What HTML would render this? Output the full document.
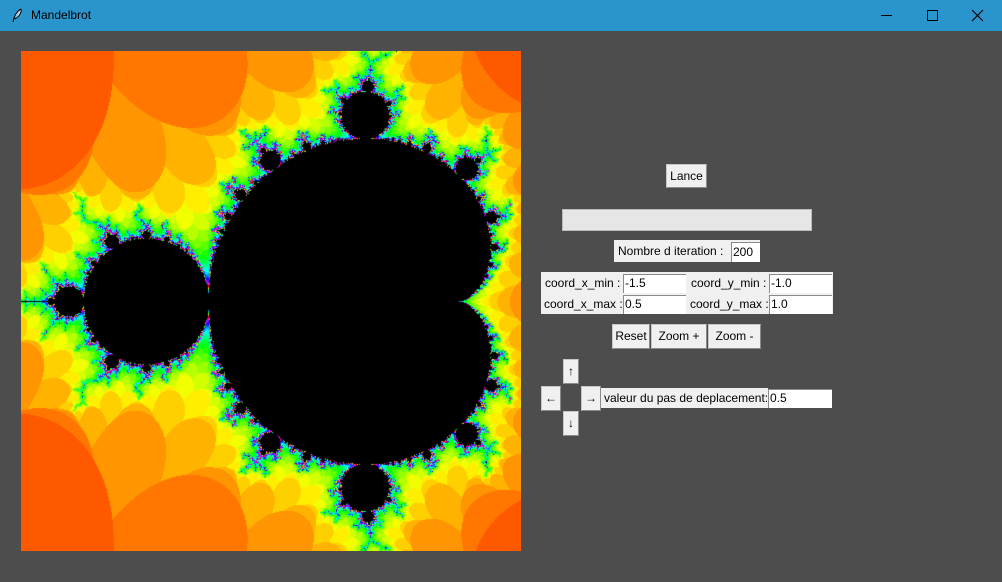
<!DOCTYPE html>
<html><head><meta charset="utf-8"><style>
*{margin:0;padding:0;box-sizing:border-box}
body{width:1002px;height:582px;background:#4d4d4d;position:relative;overflow:hidden;font-family:"Liberation Sans",sans-serif;font-size:12px;color:#000}
.title{position:absolute;left:0;top:0;width:1002px;height:31px;background:#2a95cc}
.title .t{position:absolute;left:31px;top:8px;font-size:12px}
.a{position:absolute}
.btn{position:absolute;background:#f0f0f0;border:1px solid #c8c8c8;border-right-color:#8a8a8a;border-bottom-color:#8a8a8a;text-align:center;line-height:22px}
.lbl{position:absolute;background:#f0f0f0;line-height:20px;white-space:nowrap}
.ent{position:absolute;background:#fff;border-top:1px solid #8a8a8a;border-left:1px solid #8a8a8a;padding-left:1px;line-height:17px}
canvas{position:absolute;left:21px;top:51px}
</style></head><body>
<div class="title">
<svg class="a" style="left:11px;top:8px" width="12" height="15" viewBox="0 0 12 15"><path d="M10 1 C6 3 3 8 2 14 M10 1 C11 5 7 10 3 11" stroke="#000" fill="#cfe3f3" stroke-width="1"/></svg>
<div class="t">Mandelbrot</div>
<div class="a" style="left:881px;top:15px;width:11px;height:1px;background:#000"></div>
<div class="a" style="left:927px;top:10px;width:11px;height:11px;border:1px solid #000"></div>
<svg class="a" style="left:971px;top:9px" width="13" height="13"><path d="M1 1L12 12M12 1L1 12" stroke="#000" stroke-width="1.2"/></svg>
</div>
<canvas id="c" width="500" height="500"></canvas>
<div class="btn" style="left:666px;top:164px;width:41px;height:24px">Lance</div>
<div class="a" style="left:562px;top:209px;width:250px;height:22px;background:#e6e6e6;border:1px solid #bcbcbc"></div>
<div class="lbl" style="left:614px;top:240px;width:146px;height:22px;padding-left:4px;line-height:22px">Nombre d iteration :</div>
<div class="ent" style="left:731px;top:242px;width:29px;height:20px;line-height:19px">200</div>
<div class="a" style="left:541px;top:272px;width:292px;height:42px;background:#f0f0f0"></div>
<div class="lbl" style="left:545px;top:273px">coord_x_min :</div>
<div class="ent" style="left:623px;top:274px;width:63px;height:19px">-1.5</div>
<div class="lbl" style="left:691px;top:273px">coord_y_min :</div>
<div class="ent" style="left:769px;top:274px;width:63px;height:19px">-1.0</div>
<div class="lbl" style="left:544px;top:294px">coord_x_max :</div>
<div class="ent" style="left:623px;top:295px;width:63px;height:19px">0.5</div>
<div class="lbl" style="left:690px;top:294px">coord_y_max :</div>
<div class="ent" style="left:769px;top:295px;width:63px;height:19px">1.0</div>
<div class="btn" style="left:612px;top:324px;width:38px;height:25px">Reset</div>
<div class="btn" style="left:651px;top:324px;width:56px;height:25px">Zoom +</div>
<div class="btn" style="left:708px;top:324px;width:53px;height:25px">Zoom -</div>
<div class="btn" style="left:563px;top:359px;width:16px;height:25px">↑</div>
<div class="btn" style="left:541px;top:386px;width:20px;height:25px">←</div>
<div class="btn" style="left:581px;top:386px;width:20px;height:25px">→</div>
<div class="btn" style="left:563px;top:411px;width:16px;height:25px">↓</div>
<div class="lbl" style="left:601px;top:388px;width:167px;height:20px;padding-left:3px">valeur du pas de deplacement:</div>
<div class="ent" style="left:768px;top:389px;width:64px;height:19px">0.5</div>
<script>
var c=document.getElementById('c'),x=c.getContext('2d'),im=x.createImageData(500,500),d=im.data;
function hsl(h){h=((h%360)+360)%360;var f=function(n){var k=(n+h/30)%12;return 255*(0.5-0.5*Math.max(-1,Math.min(k-3,9-k,1)));};return[f(0),f(8),f(4)];}
for(var py=0;py<500;py++)for(var px=0;px<500;px++){
var cr=-1.5+px*2/500,ci=1-py*2/500,zr=0,zi=0,n=0;
while(n<200&&zr*zr<=4&&zr*zr+zi*zi<1e100){var t=zr*zr-zi*zi+cr;zi=2*zr*zi+ci;zr=t;n++;}
var i=(py*500+px)*4,col;
if(n>=200)col=[0,0,0];else col=hsl(Math.max(20,7*n));
d[i]=col[0];d[i+1]=col[1];d[i+2]=col[2];d[i+3]=255;}
x.putImageData(im,0,0);
</script>
</body></html>
